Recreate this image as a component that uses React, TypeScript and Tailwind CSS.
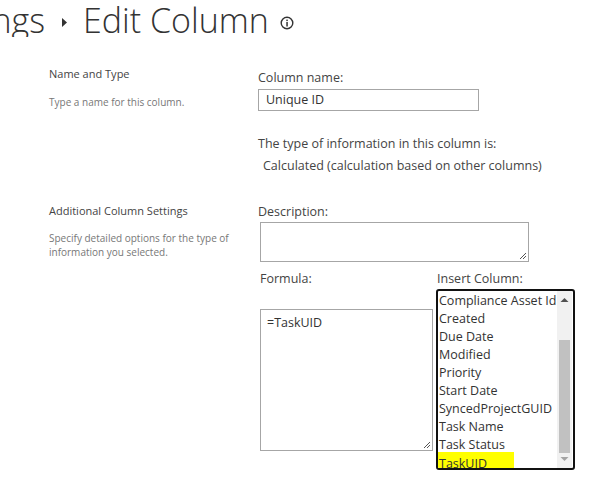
import React from "react";

const items = [
  "Compliance Asset Id",
  "Created",
  "Due Date",
  "Modified",
  "Priority",
  "Start Date",
  "SyncedProjectGUID",
  "Task Name",
  "Task Status",
  "TaskUID",
];

function Grip() {
  return (
    <svg width="9" height="9" viewBox="0 0 9 9" className="absolute right-[1px] bottom-[1px]">
      <path d="M8 2 L2 8 M8 5 L5 8" stroke="#555" strokeWidth="1" />
    </svg>
  );
}

export default function App() {
  return (
    <div
      className="w-[597px] h-[478px] bg-white overflow-hidden text-[#333]"
      style={{ fontFamily: '"Open Sans", "Noto Sans", sans-serif' }}
    >
      {/* Title */}
      <div className="flex items-center h-[40px] whitespace-nowrap">
        <div className="w-[45px] flex justify-end overflow-hidden">
          <span className="text-[34px] font-light leading-none text-[#333]">Settings</span>
        </div>
        <svg width="5" height="9" viewBox="0 0 5 9" className="ml-[17px] mr-[16px] mt-[4px]">
          <path d="M0 0 L5 4.5 L0 9 Z" fill="#333" />
        </svg>
        <span className="text-[34px] font-light leading-none text-[#333]">Edit Column</span>
        <svg width="14" height="14" viewBox="0 0 14 14" className="ml-[11px] mt-[6px]">
          <circle cx="7" cy="7" r="5.8" fill="none" stroke="#333" strokeWidth="1.4" />
          <rect x="6.3" y="6" width="1.5" height="4.5" fill="#333" />
          <rect x="6.3" y="3.6" width="1.5" height="1.5" fill="#333" />
        </svg>
      </div>

      {/* Section 1 */}
      <div className="flex mt-[25px] pl-[49px]">
        <div className="w-[209px] pt-[1px]">
          <div className="text-[11px] leading-[16px] text-[#444]">Name and Type</div>
          <div className="text-[10px] leading-[14px] text-[#777] mt-[13px]">Type a name for this column.</div>
        </div>
        <div className="flex flex-col">
          <div className="text-[12.5px] leading-[16px] text-[#444] mt-[5px]">Column name:</div>
          <div className="mt-[3px] w-[221px] h-[22px] border border-[#a6a6a6] flex items-center pl-[7px] text-[12.5px] text-[#333]">
            Unique ID
          </div>
          <div className="text-[12.5px] leading-[16px] text-[#444] mt-[25px]">
            The type of information in this column is:
          </div>
          <div className="text-[12.5px] leading-[16px] text-[#444] mt-[6px] ml-[5px]">
            Calculated (calculation based on other columns)
          </div>
        </div>
      </div>

      {/* Section 2 */}
      <div className="flex mt-[29px] pl-[49px]">
        <div className="w-[209px]">
          <div className="text-[11px] leading-[16px] text-[#444]">Additional Column Settings</div>
          <div className="text-[10px] leading-[14px] text-[#777] mt-[12px] w-[190px]">
            Specify detailed options for the type of information you selected.
          </div>
        </div>
        <div className="flex flex-col">
          <div className="text-[12.5px] leading-[16px] text-[#444] mt-[1px]">Description:</div>
          <div className="relative mt-[2px] ml-[2px] w-[269px] h-[40px] border border-[#a6a6a6]">
            <Grip />
          </div>
          <div className="flex mt-[9px] ml-[2px]">
            <div className="flex flex-col w-[176px]">
              <div className="text-[12.5px] leading-[16px] text-[#444]">Formula:</div>
              <div className="relative mt-[22px] w-[173px] h-[142px] border border-[#a6a6a6] pl-[6px] pt-[4px] text-[12.5px] leading-[18px] text-[#333]">
                =TaskUID
                <Grip />
              </div>
            </div>
            <div className="flex flex-col">
              <div className="text-[12.5px] leading-[16px] text-[#444] ml-[1px]">Insert Column:</div>
              <div className="mt-[2px] w-[139px] h-[181px] border-2 border-[#111] rounded-[3px] flex overflow-hidden">
                <div className="flex-1 pt-[1px] pl-[1px]">
                  {items.map((it) => (
                    <div
                      key={it}
                      className="h-[18px] text-[12.5px] leading-[18px] whitespace-nowrap text-[#333]"
                    >
                      {it === "TaskUID" ? (
                        <span className="block bg-[#ffff00] w-[76px] h-[22px] mt-[-2px] ml-[-1px] pl-[1px] leading-[24px] rounded-br-[3px]">
                          {it}
                        </span>
                      ) : (
                        it
                      )}
                    </div>
                  ))}
                </div>
                <div className="w-[15px] flex flex-col items-center bg-[#f1f1f1] mr-[1px]">
                  <svg width="9" height="6" viewBox="0 0 9 6" className="mt-[6px]">
                    <path d="M0.5 5 L4.5 1 L8.5 5 Z" fill="#505050" />
                  </svg>
                  <div className="w-[11px] flex-1 bg-[#c1c1c1] mt-[37px] mb-[3px]" />
                  <svg width="9" height="6" viewBox="0 0 9 6" className="mb-[6px]">
                    <path d="M0.5 1 L4.5 5 L8.5 1 Z" fill="#a3a3a3" />
                  </svg>
                </div>
              </div>
            </div>
          </div>
        </div>
      </div>
    </div>
  );
}
